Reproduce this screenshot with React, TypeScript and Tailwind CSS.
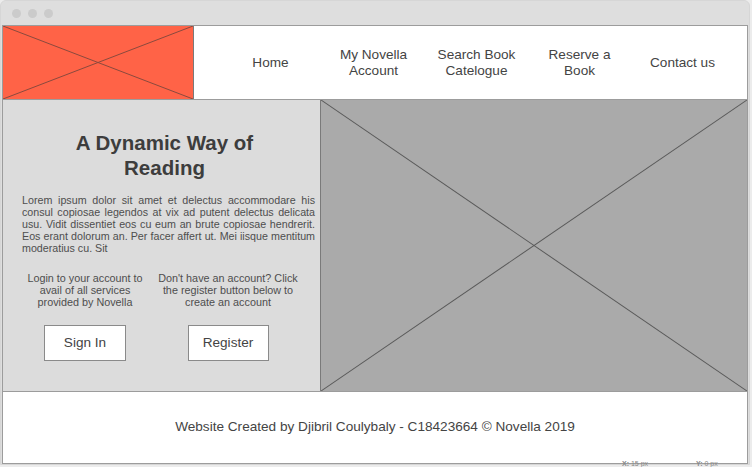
import React from "react";

function Cross({ stroke = "#555" }: { stroke?: string }) {
  return (
    <svg className="absolute inset-0 h-full w-full" preserveAspectRatio="none" viewBox="0 0 100 100">
      <line x1="0" y1="0" x2="100" y2="100" stroke={stroke} strokeWidth="1" vectorEffect="non-scaling-stroke" />
      <line x1="100" y1="0" x2="0" y2="100" stroke={stroke} strokeWidth="1" vectorEffect="non-scaling-stroke" />
    </svg>
  );
}

const nav = [
  ["Home"],
  ["My Novella", "Account"],
  ["Search Book", "Catelogue"],
  ["Reserve a", "Book"],
  ["Contact us"],
];

const lorem = [
  "Lorem ipsum dolor sit amet et delectus accommodare his",
  "consul copiosae legendos at vix ad putent delectus delicata",
  "usu. Vidit dissentiet eos cu eum an brute copiosae hendrerit.",
  "Eos erant dolorum an. Per facer affert ut. Mei iisque mentitum",
];

export default function App() {
  return (
    <div className="relative h-[467px] w-[752px] overflow-hidden bg-[#ececec] font-['Liberation_Sans',Arial,sans-serif] text-[#444]">
      <div className="w-[750px] rounded-t-[6px] border border-[#d6d6d6] bg-[#dedede]">
        <div className="flex h-[24px] items-center gap-[7px] pl-[11px]">
          <span className="h-[9px] w-[9px] rounded-full bg-[#cbcbcb]" />
          <span className="h-[9px] w-[9px] rounded-full bg-[#cbcbcb]" />
          <span className="h-[9px] w-[9px] rounded-full bg-[#cbcbcb]" />
        </div>
        <div className="mx-[1px] border border-[#9c9c9c] bg-white">
          <header className="flex h-[74px] border-b border-[#9c9c9c]">
            <div className="relative w-[191px] border-r border-[#7a7a7a] bg-[#ff6347]">
              <Cross stroke="#8a4a3e" />
            </div>
            <nav className="flex items-center pl-[25px] text-[13.6px] leading-[16px] text-[#444]">
              {nav.map((lines) => (
                <div key={lines.join(" ")} className="w-[103px] text-center">
                  {lines.map((l) => (
                    <div key={l}>{l}</div>
                  ))}
                </div>
              ))}
            </nav>
          </header>
          <main className="flex h-[292px] border-b border-[#9c9c9c]">
            <section className="w-[318px] border-r border-[#7a7a7a] bg-[#dcdcdc] pt-[30px]">
              <h1 className="pl-[6px] text-center text-[20.5px] font-bold leading-[25px] text-[#3d3d3d]">
                A Dynamic Way of
                <br />
                Reading
              </h1>
              <div className="mt-[14px] pl-[19px] pr-[5px] text-[10.7px] leading-[12px] text-[#4e4e4e]">
                {lorem.map((l) => (
                  <p key={l} className="whitespace-nowrap text-justify [text-align-last:justify]">
                    {l}
                  </p>
                ))}
                <p>moderatius cu. Sit</p>
              </div>
              <div className="mt-[18px] flex text-[10.8px] leading-[12px] text-[#4e4e4e]">
                <div className="flex w-[162px] flex-col items-center pl-[2px]">
                  <p className="text-center">
                    Login to your account to
                    <br />
                    avail of all services
                    <br />
                    provided by Novella
                  </p>
                  <button className="mt-[17px] h-[36px] w-[82px] border border-[#8a8a8a] bg-white text-[13.6px] text-[#444]">
                    Sign In
                  </button>
                </div>
                <div className="flex w-[126px] flex-col items-center">
                  <p className="whitespace-nowrap text-center">
                    Don't have an account? Click
                    <br />
                    the register button below to
                    <br />
                    create an account
                  </p>
                  <button className="mt-[17px] h-[36px] w-[81px] border border-[#8a8a8a] bg-white text-[13.6px] text-[#444]">
                    Register
                  </button>
                </div>
              </div>
            </section>
            <div className="relative flex-1 bg-[#aaaaaa]">
              <Cross stroke="#5a5a5a" />
            </div>
          </main>
          <footer className="flex h-[71px] items-center justify-center text-[13.6px] text-[#444]">
            Website Created by Djibril Coulybaly - C18423664 © Novella 2019
          </footer>
        </div>
      </div>
      <div className="absolute bottom-0 left-[622px] flex gap-[48px] text-[7px] leading-[6px] text-[#888]">
        <span>
          <b>X:</b> 15 px
        </span>
        <span>
          <b>Y:</b> 0 px
        </span>
      </div>
    </div>
  );
}
